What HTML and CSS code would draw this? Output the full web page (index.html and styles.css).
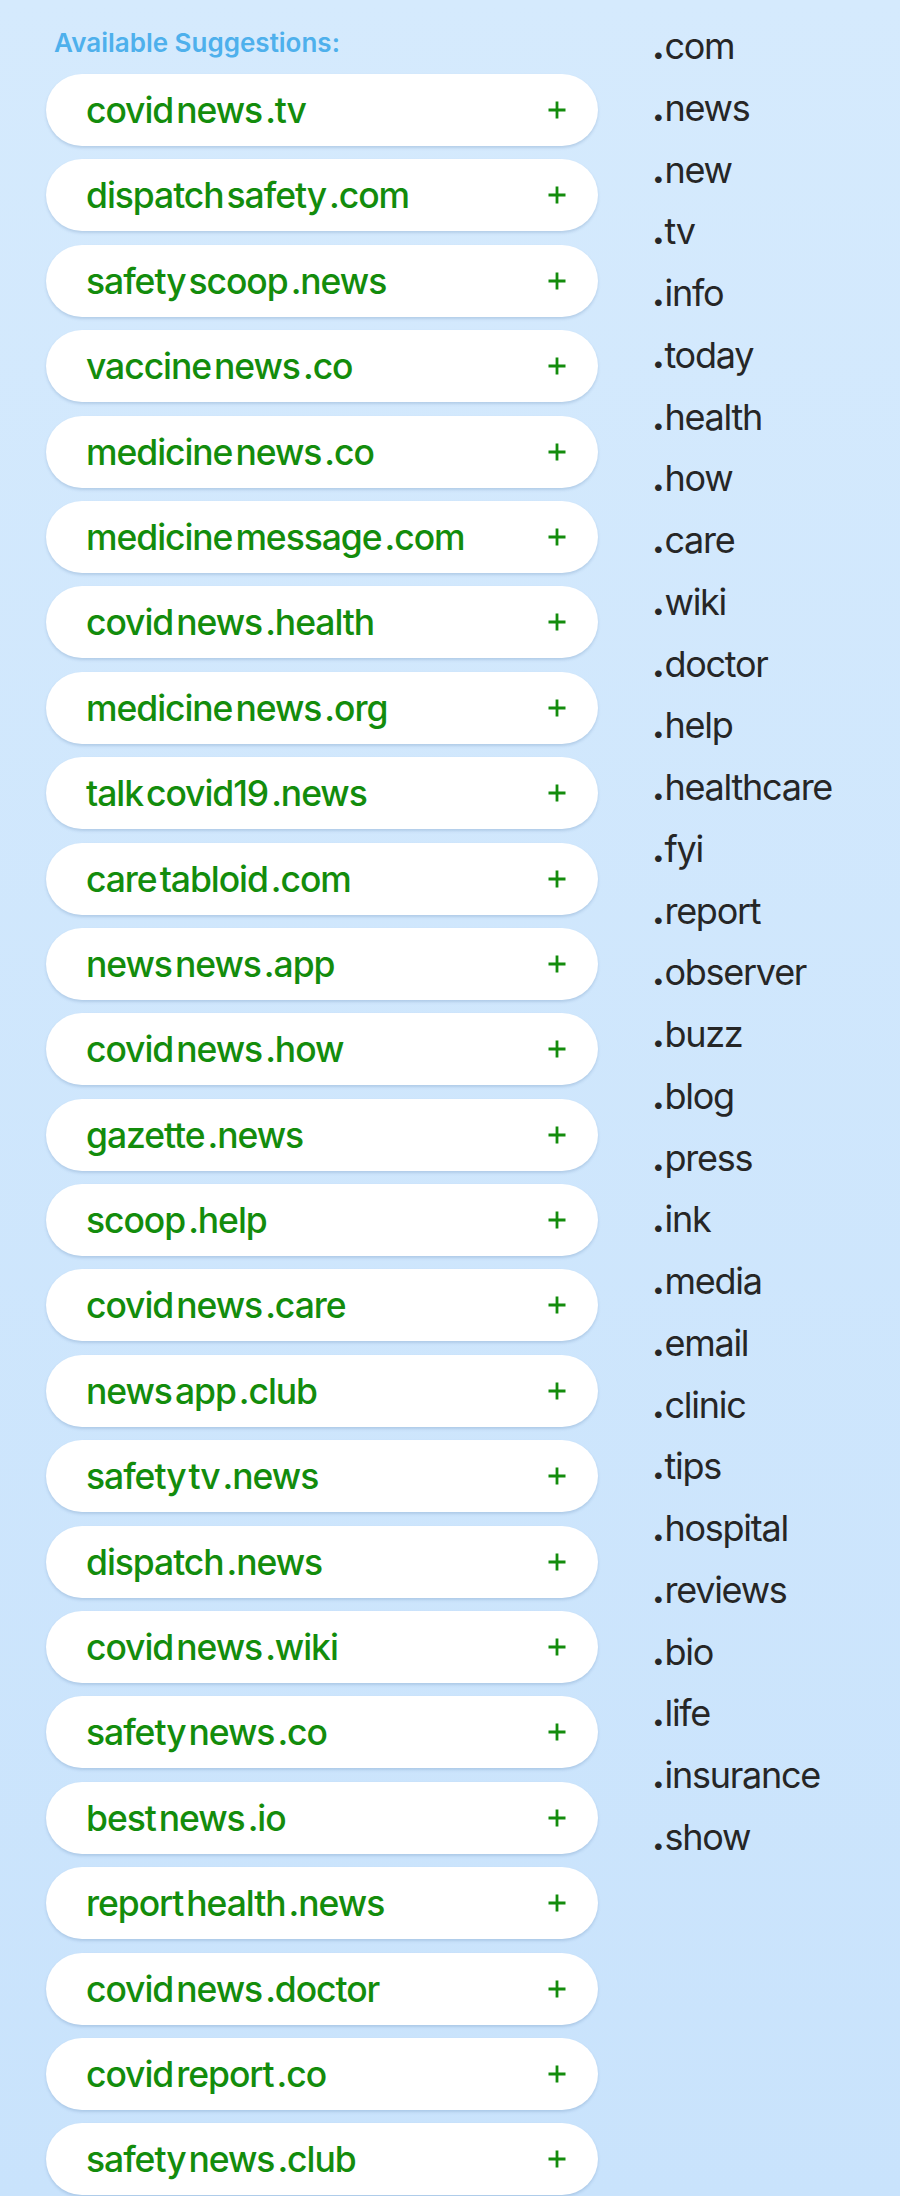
FILE: index.html
```html
<!DOCTYPE html>
<html>
<head>
<meta charset="utf-8">
<link rel="stylesheet" href="styles.css">
</head>
<body>
<div class="page">
  <section class="suggestions">
    <h2 class="heading">Available Suggestions:</h2>
    <ul class="pills">
      <li class="pill"><span class="name"><span>covid</span><span>news</span><span>.tv</span></span><svg class="plus" viewBox="0 0 18 18"><path d="M9 0.5V17.5M0.5 9H17.5"/></svg></li>
      <li class="pill"><span class="name"><span>dispatch</span><span>safety</span><span>.com</span></span><svg class="plus" viewBox="0 0 18 18"><path d="M9 0.5V17.5M0.5 9H17.5"/></svg></li>
      <li class="pill"><span class="name"><span>safety</span><span>scoop</span><span>.news</span></span><svg class="plus" viewBox="0 0 18 18"><path d="M9 0.5V17.5M0.5 9H17.5"/></svg></li>
      <li class="pill"><span class="name"><span>vaccine</span><span>news</span><span>.co</span></span><svg class="plus" viewBox="0 0 18 18"><path d="M9 0.5V17.5M0.5 9H17.5"/></svg></li>
      <li class="pill"><span class="name"><span>medicine</span><span>news</span><span>.co</span></span><svg class="plus" viewBox="0 0 18 18"><path d="M9 0.5V17.5M0.5 9H17.5"/></svg></li>
      <li class="pill"><span class="name"><span>medicine</span><span>message</span><span>.com</span></span><svg class="plus" viewBox="0 0 18 18"><path d="M9 0.5V17.5M0.5 9H17.5"/></svg></li>
      <li class="pill"><span class="name"><span>covid</span><span>news</span><span>.health</span></span><svg class="plus" viewBox="0 0 18 18"><path d="M9 0.5V17.5M0.5 9H17.5"/></svg></li>
      <li class="pill"><span class="name"><span>medicine</span><span>news</span><span>.org</span></span><svg class="plus" viewBox="0 0 18 18"><path d="M9 0.5V17.5M0.5 9H17.5"/></svg></li>
      <li class="pill"><span class="name"><span>talk</span><span>covid19</span><span>.news</span></span><svg class="plus" viewBox="0 0 18 18"><path d="M9 0.5V17.5M0.5 9H17.5"/></svg></li>
      <li class="pill"><span class="name"><span>care</span><span>tabloid</span><span>.com</span></span><svg class="plus" viewBox="0 0 18 18"><path d="M9 0.5V17.5M0.5 9H17.5"/></svg></li>
      <li class="pill"><span class="name"><span>news</span><span>news</span><span>.app</span></span><svg class="plus" viewBox="0 0 18 18"><path d="M9 0.5V17.5M0.5 9H17.5"/></svg></li>
      <li class="pill"><span class="name"><span>covid</span><span>news</span><span>.how</span></span><svg class="plus" viewBox="0 0 18 18"><path d="M9 0.5V17.5M0.5 9H17.5"/></svg></li>
      <li class="pill"><span class="name"><span>gazette</span><span>.news</span></span><svg class="plus" viewBox="0 0 18 18"><path d="M9 0.5V17.5M0.5 9H17.5"/></svg></li>
      <li class="pill"><span class="name"><span>scoop</span><span>.help</span></span><svg class="plus" viewBox="0 0 18 18"><path d="M9 0.5V17.5M0.5 9H17.5"/></svg></li>
      <li class="pill"><span class="name"><span>covid</span><span>news</span><span>.care</span></span><svg class="plus" viewBox="0 0 18 18"><path d="M9 0.5V17.5M0.5 9H17.5"/></svg></li>
      <li class="pill"><span class="name"><span>news</span><span>app</span><span>.club</span></span><svg class="plus" viewBox="0 0 18 18"><path d="M9 0.5V17.5M0.5 9H17.5"/></svg></li>
      <li class="pill"><span class="name"><span>safety</span><span>tv</span><span>.news</span></span><svg class="plus" viewBox="0 0 18 18"><path d="M9 0.5V17.5M0.5 9H17.5"/></svg></li>
      <li class="pill"><span class="name"><span>dispatch</span><span>.news</span></span><svg class="plus" viewBox="0 0 18 18"><path d="M9 0.5V17.5M0.5 9H17.5"/></svg></li>
      <li class="pill"><span class="name"><span>covid</span><span>news</span><span>.wiki</span></span><svg class="plus" viewBox="0 0 18 18"><path d="M9 0.5V17.5M0.5 9H17.5"/></svg></li>
      <li class="pill"><span class="name"><span>safety</span><span>news</span><span>.co</span></span><svg class="plus" viewBox="0 0 18 18"><path d="M9 0.5V17.5M0.5 9H17.5"/></svg></li>
      <li class="pill"><span class="name"><span>best</span><span>news</span><span>.io</span></span><svg class="plus" viewBox="0 0 18 18"><path d="M9 0.5V17.5M0.5 9H17.5"/></svg></li>
      <li class="pill"><span class="name"><span>report</span><span>health</span><span>.news</span></span><svg class="plus" viewBox="0 0 18 18"><path d="M9 0.5V17.5M0.5 9H17.5"/></svg></li>
      <li class="pill"><span class="name"><span>covid</span><span>news</span><span>.doctor</span></span><svg class="plus" viewBox="0 0 18 18"><path d="M9 0.5V17.5M0.5 9H17.5"/></svg></li>
      <li class="pill"><span class="name"><span>covid</span><span>report</span><span>.co</span></span><svg class="plus" viewBox="0 0 18 18"><path d="M9 0.5V17.5M0.5 9H17.5"/></svg></li>
      <li class="pill"><span class="name"><span>safety</span><span>news</span><span>.club</span></span><svg class="plus" viewBox="0 0 18 18"><path d="M9 0.5V17.5M0.5 9H17.5"/></svg></li>
    </ul>
  </section>
  <ul class="tlds">
    <li><b>.</b>com</li>
    <li><b>.</b>news</li>
    <li><b>.</b>new</li>
    <li><b>.</b>tv</li>
    <li><b>.</b>info</li>
    <li><b>.</b>today</li>
    <li><b>.</b>health</li>
    <li><b>.</b>how</li>
    <li><b>.</b>care</li>
    <li><b>.</b>wiki</li>
    <li><b>.</b>doctor</li>
    <li><b>.</b>help</li>
    <li><b>.</b>healthcare</li>
    <li><b>.</b>fyi</li>
    <li><b>.</b>report</li>
    <li><b>.</b>observer</li>
    <li><b>.</b>buzz</li>
    <li><b>.</b>blog</li>
    <li><b>.</b>press</li>
    <li><b>.</b>ink</li>
    <li><b>.</b>media</li>
    <li><b>.</b>email</li>
    <li><b>.</b>clinic</li>
    <li><b>.</b>tips</li>
    <li><b>.</b>hospital</li>
    <li><b>.</b>reviews</li>
    <li><b>.</b>bio</li>
    <li><b>.</b>life</li>
    <li><b>.</b>insurance</li>
    <li><b>.</b>show</li>
  </ul>
</div>
</body>
</html>
```

FILE: styles.css
```css
html, body {
  margin: 0;
  padding: 0;
}
body {
  width: 900px;
  height: 2196px;
  overflow: hidden;
  background: linear-gradient(180deg, #d5eafd 0%, #c9e3fc 100%);
  font-family: Inter, "Noto Sans", sans-serif;
}
.page {
  display: flex;
  align-items: flex-start;
}
.suggestions {
  width: 552px;
  margin-left: 46px;
  padding-top: 28px;
}
.heading {
  margin: 0 0 16px 8px;
  font-size: 26px;
  line-height: 30px;
  font-weight: 600;
  color: #4eb0ec;
  letter-spacing: 0;
}
.pills {
  list-style: none;
  margin: 0;
  padding: 0;
  display: flex;
  flex-direction: column;
  gap: 13.4px;
}
.pill {
  height: 72px;
  box-sizing: border-box;
  background: #ffffff;
  border-radius: 36px;
  box-shadow: 0 2px 3px rgba(70, 110, 160, 0.22);
  display: flex;
  align-items: center;
  justify-content: space-between;
  padding: 0 32px 0 40px;
}
.name {
  display: flex;
  gap: 3px;
  font-size: 35.5px;
  font-weight: 450;
  letter-spacing: -0.03em;
  color: #138c0c;
  line-height: 44px;
  padding-top: 2px;
}
.plus {
  width: 18px;
  height: 18px;
  fill: none;
  stroke: #138c0c;
  stroke-width: 2.8;
}
.tlds {
  list-style: none;
  margin: 0 0 0 54px;
  padding: 16px 0 0 0;
  font-size: 36px;
  line-height: 61.75px;
  letter-spacing: -0.035em;
  color: #262626;
}
.tlds b {
  font-weight: 800;
  margin-right: 1px;
}
```
